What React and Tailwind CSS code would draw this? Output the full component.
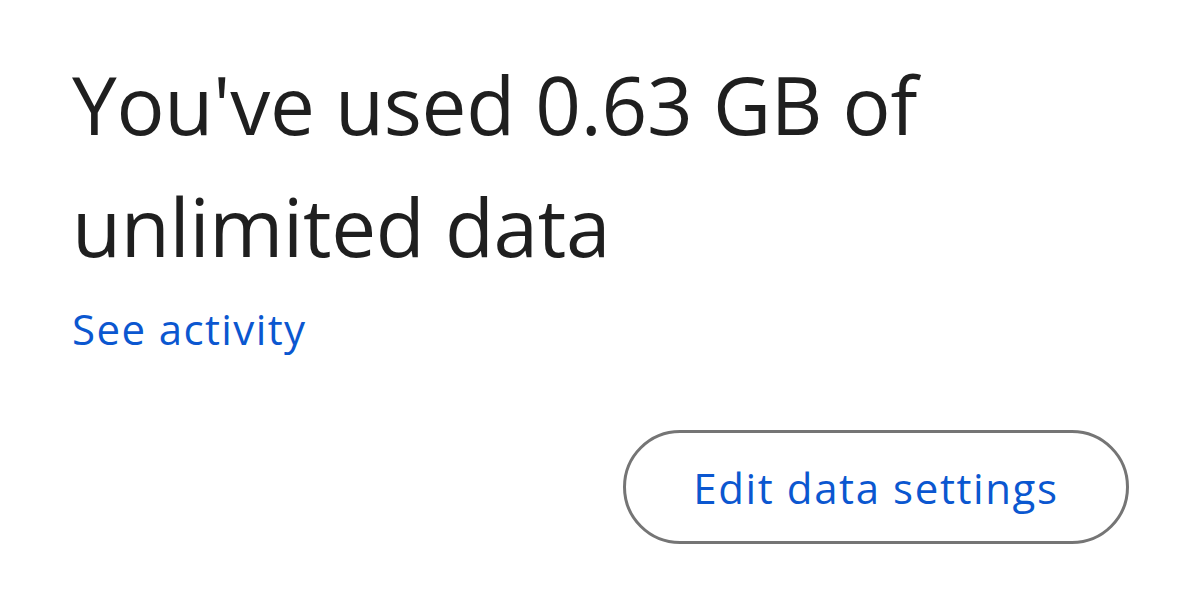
export default function App() {
  return (
    <div className="w-[1200px] h-[613px] bg-white overflow-hidden" style={{ fontFamily: '"Open Sans", Roboto, sans-serif' }}>
      <div className="pl-[72px] pr-[71px] pt-[43px]">
        <h1 className="text-[80px] leading-[122px] text-[#1f1f1f] font-medium tracking-[-0.3px]">
          You've used 0.63 GB of
          <br />
          unlimited data
        </h1>
        <a className="block mt-[17px] text-[42px] leading-[50px] text-[#0b57d0] font-medium tracking-[1.4px]">See activity</a>
        <div className="flex justify-end mt-[76px]">
          <button className="w-[506px] h-[114px] rounded-full border-[3px] border-[#757575] text-[42px] text-[#0b57d0] font-medium tracking-[1.6px]">
            Edit data settings
          </button>
        </div>
      </div>
    </div>
  );
}
